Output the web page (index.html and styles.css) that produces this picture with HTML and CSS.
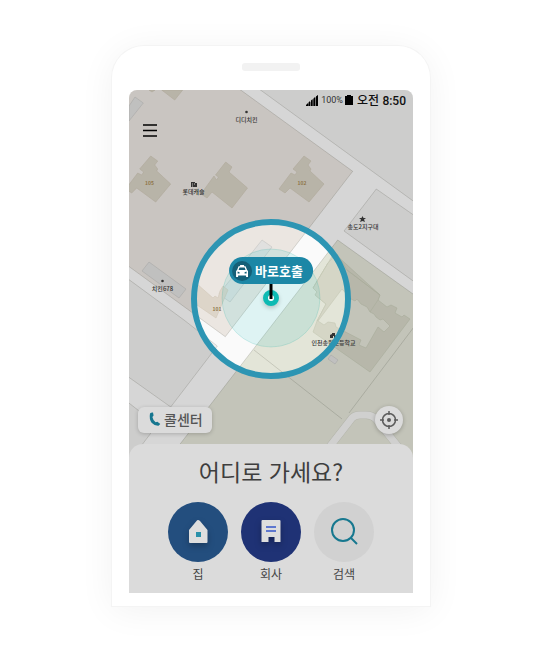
FILE: index.html
```html
<!DOCTYPE html>
<html lang="ko">
<head>
<meta charset="utf-8">
<meta name="viewport" content="width=device-width, initial-scale=1">
<title>택시 호출</title>
<link rel="stylesheet" href="styles.css">
</head>
<body>
<main class="phone">
  <div class="speaker"></div>
  <div class="screen">
    <section class="map">
      <svg class="map-art" viewBox="129 90 284 370" preserveAspectRatio="xMidYMid slice" aria-hidden="true">
        <defs>
          <path id="house" d="M304 156l7 5-3 4 3 4-1 2 14 13-15 18-19-14-5 5-6-4 12-16 4 2 2-3-4-3z"/>
        </defs>
        <rect class="road" x="129" y="90" width="284" height="370"/>
        <g class="line">
          <!-- blocks -->
          <path class="beige" d="M120 80H227L240.700 90 352.700 171.300 225.300 336.700 120 260z"/>
          <path class="grey" d="M246 80H420V206L412.700 200.700 260.500 90z"/>
          <path class="grey" d="M376.300 189L420 219.500V286L344 231z"/>
          <path class="grey" d="M120 273L184 320 217.300 346 170.700 407 120 371z"/>
          <path class="grey" d="M120 396L157 425 129 462H120z"/>
          <path class="green" d="M337.700 240L420 299V470H160z"/>
          <!-- green paths -->
          <path class="trace" d="M254 350L342 419M349 413L420 319"/>
          <path class="lane-edge" d="M324 454L352 418Q355 415 360 415H366Q372 415 376 419L404 454"/>
          <path class="lane" d="M324 454L352 418Q355 415 360 415H366Q372 415 376 419L404 454"/>
          <!-- buildings -->
          <use class="building" href="#house"/>
          <use class="building" href="#house" x="-153.300"/>
          <path class="building" d="M225.700 162l6.300 5-3 5 18.500 16-15.500 20-20-16-5 6-6-4 13-18 2.500 4 2-3-3-2z"/>
          <path class="building" d="M161.700 90L174.700 100 182.700 90zM149 90L152 92 155 90z"/>
          <path class="shed" d="M135 97L143.300 103 129 121V106z"/>
          <path class="shed" d="M149 262L186 289 179 298 142 271z"/>
          <path class="shed" d="M262 240L272 247 230 302 219 294z"/>
          <path class="block101" d="M196 283L213 298 215 296 218 298 220 291 223 286 228 290 216 318 194 303z"/>
          <path class="school" d="M328 263L334 253 380 295 378 300 387 307 391 305 397 308 395 313 402 317 404 315 410 319 370 372 313 332 317 321 326 304 315 295 317 292 313 288z"/>
          <path class="school" d="M313 288L328 263 337 254 347 270 380 295 378 300 370 312 345 300 317 321 326 304 315 295 317 292z" stroke="none"/>
          <path class="school-edge" d="M313 288L328 263M347 270L380 295"/>
          <path class="green yard" d="M342 289L351 299 355 301 357 299 361 304 365 306 367 307 370 312 374 314 376 317 380 320 383 319 390 326 384 332 378 327 366 348 359 345 361 340 336 327 335 323 328 322 324 325 318 321z"/>
          <path class="shed" d="M331 355L338 360 335 364 328 359z"/>
        </g>
        <!-- dimmed surroundings with a clear centre -->
        <path class="dim" fill-rule="evenodd" d="M120 80H420V470H120zM271 222a77 77 0 1 0 0 154a77 77 0 1 0 0-154z"/>
        <circle class="halo" cx="271" cy="298" r="49"/>
        <g class="poi">
          <circle cx="246.500" cy="112" r="1.300"/>
          <text x="246.500" y="122">디디치킨</text>
          <path fill-rule="evenodd" d="M191 182h4v1h2v4h-6zM192 183.500v1h1v-1zM194 183.500v1h1v-1zM192 185.500v1h1v-1z"/>
          <text x="193.500" y="194">롯데캐슬</text>
          <circle cx="162.500" cy="281" r="1.300"/>
          <text x="162.500" y="291">치킨678</text>
          <path d="M362.500 216l1 2h2.500l-2 1.500 1 2.500-2.500-1-2.500 1 1-2.500-2-1.500h2.500z"/>
          <text x="363" y="229">송도2지구대</text>
          <path d="M330 338v-3l2-1v-1h3v2l1 1v2h-2v-2h-1v2z"/>
          <text x="333.500" y="345">인천송원초등학교</text>
          <g class="number">
            <text x="149.500" y="185">105</text>
            <text x="302" y="185">102</text>
            <text x="217" y="311">101</text>
          </g>
        </g>
        <circle class="ring" cx="271" cy="299" r="77"/>
        <circle class="pin" cx="271" cy="298" r="5.500"/>
        <path class="stem" d="M271 282v17"/>
      </svg>

      <header class="status">
        <svg class="signal" viewBox="0 0 12 11" aria-hidden="true"><path class="wedge" d="M0 11L12 0V11z"/><path d="M0 11v-1l2-2v3zM2.500 11V7.500l1.500-1.500v5zM5 11V5.500l1.500-1.500v7zM7.500 11V3.500L9 2v9zM10 11V1.500L12 0v11z"/></svg>
        <span class="percent">100%</span>
        <svg class="battery" viewBox="0 0 8 10" aria-hidden="true"><path d="M2 0h4v1h2v9H0V1h2z"/></svg>
        <span class="clock">오전 <span class="digits">8:50</span></span>
      </header>

      <button class="menu" type="button" aria-label="메뉴">
        <svg viewBox="0 0 14 13" aria-hidden="true"><path d="M0 1h14M0 6.500h14M0 12h14"/></svg>
      </button>

      <button class="hail" type="button">
        <span class="hail-icon">
          <svg viewBox="0 0 12 12" aria-hidden="true">
            <path fill-rule="evenodd" d="M4 0h4v1.200h1.500L11 5l1 1v6h-2v-1.500H2V12H0V6l1-1 1.500-3.800H4zM3.400 2.600L2.500 5h7l-.9-2.400zM1.500 6.600v1.900h2V7.300zM10.500 6.600v1.900h-2V7.300z"/>
          </svg>
        </span>
        바로호출
      </button>

      <div class="map-actions">
        <button class="call" type="button">
          <svg viewBox="0 0 12 14" aria-hidden="true"><path d="M1 1.500Q2 .3 4 .5L4.600 3.600 3.400 5Q4 8.400 6.600 10.200L8.400 9.800 11.300 12 9.500 13.800Q5.500 14 2.600 10.800 0 7 1 1.500z"/></svg>
          콜센터
        </button>
        <button class="locate" type="button" aria-label="현재 위치">
          <svg viewBox="0 0 18 18" aria-hidden="true"><circle cx="9" cy="9" r="6.500"/><path d="M9 0v4M9 14v4M0 9h4M14 9h4"/><circle class="dot" cx="9" cy="9" r="2"/></svg>
        </button>
      </div>
    </section>

    <section class="sheet">
      <h1>어디로 가세요?</h1>
      <nav class="places">
        <button class="place" type="button">
          <span class="disc home">
            <svg viewBox="0 0 60 60" aria-hidden="true"><path class="shape" d="M30 18Q31 18 32 19L39.500 28V40Q39.500 41 38.500 41H22Q21 41 21 40V28L28.500 19Q29 18 30 18z"/><path class="window" d="M28 30h5v5h-5z"/></svg>
          </span>
          집
        </button>
        <button class="place" type="button">
          <span class="disc work">
            <svg viewBox="0 0 60 60" aria-hidden="true"><path class="shape" d="M21.500 18H38.500Q39.500 18 39.500 19V40H33.500V35H27.500V40H20.500V19Q20.500 18 21.500 18z"/><path class="stripes" d="M25 25h10M25 29h10"/></svg>
          </span>
          회사
        </button>
        <button class="place" type="button">
          <span class="disc search">
            <svg viewBox="0 0 60 60" aria-hidden="true"><circle cx="29" cy="28" r="11"/><path d="M36.500 35.500L43 42"/></svg>
          </span>
          검색
        </button>
      </nav>
    </section>
  </div>
</main>
</body>
</html>
```

FILE: styles.css
```css
* { box-sizing: border-box; }

body {
  margin: 0;
  padding: 46px 110px 46px 112px;
  background: #fff;
  color: #444;
  font-family: "Noto Sans CJK KR", "Noto Sans", sans-serif;
}

button {
  margin: 0;
  padding: 0;
  border: 0;
  background: none;
  color: inherit;
  font: inherit;
  cursor: pointer;
}

svg { display: block; }

.phone {
  padding: 17px 17px 13px;
  border-radius: 32px 32px 0 0;
  background: #fff;
  box-shadow: 0 0 0 1px #f4f4f4, 0 4px 36px rgba(0, 0, 0, .06);
}

.speaker {
  width: 58px;
  height: 8px;
  margin: 0 auto 19px;
  border-radius: 3px;
  background: #f2f2f2;
}

.screen {
  overflow: hidden;
  border-radius: 8px 8px 0 0;
}

/* Map */
.map {
  position: relative;
  height: 370px;
}

.map-art {
  position: absolute;
  inset: 0;
  width: 100%;
  height: 100%;
}

.line { stroke: rgba(90, 90, 75, .35); stroke-width: .6; }
.road { fill: #fafafa; }
.beige { fill: #ebe6e1; }
.grey { fill: #efefee; }
.green { fill: #e3e5d8; }
.building { fill: #d7d2c4; stroke: #cbc5b4; }
.block101 { fill: #ddd5c9; stroke: #d2c8b8; }
.shed { fill: #e0e0df; stroke: #c4c4c2; }
.school { fill: #d5d6c6; stroke: #c5c7b4; }
.school-edge { fill: none; stroke: #c5c7b4; }
.yard { stroke: #c5c7b4; }
.trace { fill: none; }
.lane { fill: none; stroke: #f3f3f2; stroke-width: 7; }
.lane-edge { fill: none; stroke: #d2d3c8; stroke-width: 8; }
.dim { fill: rgba(0, 0, 0, .14); }
.halo { fill: rgba(0, 190, 190, .11); stroke: rgba(0, 160, 150, .15); }
.ring { fill: none; stroke: #2d95b3; stroke-width: 6; }
.pin { fill: #fff; stroke: #0dbab3; stroke-width: 5; filter: drop-shadow(0 2px 2px rgba(0, 0, 0, .2)); }
.stem { stroke: #000; stroke-width: 3; }
.poi { fill: #333; font-size: 6px; font-weight: 500; text-anchor: middle; }
.number { fill: #8f7547; font-size: 5px; font-weight: 700; }

.status {
  position: absolute;
  top: 0;
  right: 7px;
  display: flex;
  align-items: center;
  height: 20px;
  color: #111;
}

.signal { width: 12px; height: 11px; margin-right: 3px; }
.wedge { fill: #777; }
.battery { width: 8px; height: 10px; margin: 0 4px 0 2px; }
.percent { color: #333; font: 9px Roboto, sans-serif; }
.clock { font-size: 12px; font-weight: 500; line-height: 20px; }
.digits { font-family: Roboto, sans-serif; }

.menu {
  position: absolute;
  top: 30px;
  left: 10px;
  padding: 4px;
}

.menu svg { width: 14px; height: 13px; stroke: #000; stroke-width: 1.5; }

.hail {
  position: absolute;
  top: 167px;
  left: 50%;
  display: flex;
  align-items: center;
  gap: 3px;
  height: 27px;
  padding: 0 10px 0 3px;
  border-radius: 14px;
  background: #1c87a6;
  color: #fff;
  font-size: 13px;
  font-weight: 700;
  white-space: nowrap;
  transform: translateX(-50%);
}

.hail-icon {
  display: grid;
  place-items: center;
  width: 20px;
  height: 20px;
  border-radius: 50%;
  background: #145f77;
}

.hail-icon svg { width: 12px; height: 12px; fill: #fff; }

.map-actions {
  position: absolute;
  right: 10px;
  bottom: 26px;
  left: 9px;
  display: flex;
  align-items: center;
  justify-content: space-between;
}

.call {
  display: flex;
  align-items: center;
  gap: 3px;
  height: 26px;
  padding: 0 9px 2px 11px;
  border-radius: 6px;
  background: #dbdbdb;
  box-shadow: 0 1px 4px rgba(0, 0, 0, .2);
  color: #555;
  font-size: 14px;
  font-weight: 500;
}

.call svg { width: 12px; height: 14px; fill: #16768f; }

.locate {
  display: grid;
  place-items: center;
  width: 28px;
  height: 28px;
  border-radius: 50%;
  background: #dbdbdb;
  box-shadow: 0 1px 4px rgba(0, 0, 0, .25);
}

.locate svg { width: 18px; height: 18px; fill: none; stroke: #5c5c5c; stroke-width: 1.5; }
.locate .dot { fill: #5c5c5c; stroke: none; }

/* Destination sheet */
.sheet {
  position: relative;
  margin-top: -16px;
  padding: 10px 16px 9px;
  border-radius: 14px 14px 0 0;
  background: #dbdbdb;
}

h1 {
  margin: 0 0 14px;
  color: #3e3e3e;
  font-size: 23px;
  font-weight: 400;
  line-height: 34px;
  text-align: center;
}

.places {
  display: flex;
  justify-content: center;
  gap: 13px;
}

.place {
  display: flex;
  flex-direction: column;
  align-items: center;
  gap: 2px;
  font-size: 12px;
  line-height: 20px;
}

.disc {
  width: 60px;
  height: 60px;
  border-radius: 50%;
}

.home { background: #234e7e; }
.work { background: #1f3275; }
.search { background: #d1d1d1; }
.shape { fill: #dedede; filter: drop-shadow(0 3px 3px rgba(0, 0, 0, .25)); }
.window { fill: #2a91aa; }
.stripes { stroke: #5f78cf; stroke-width: 2; }
.search svg { fill: none; stroke: #17788f; stroke-width: 2; }
```
